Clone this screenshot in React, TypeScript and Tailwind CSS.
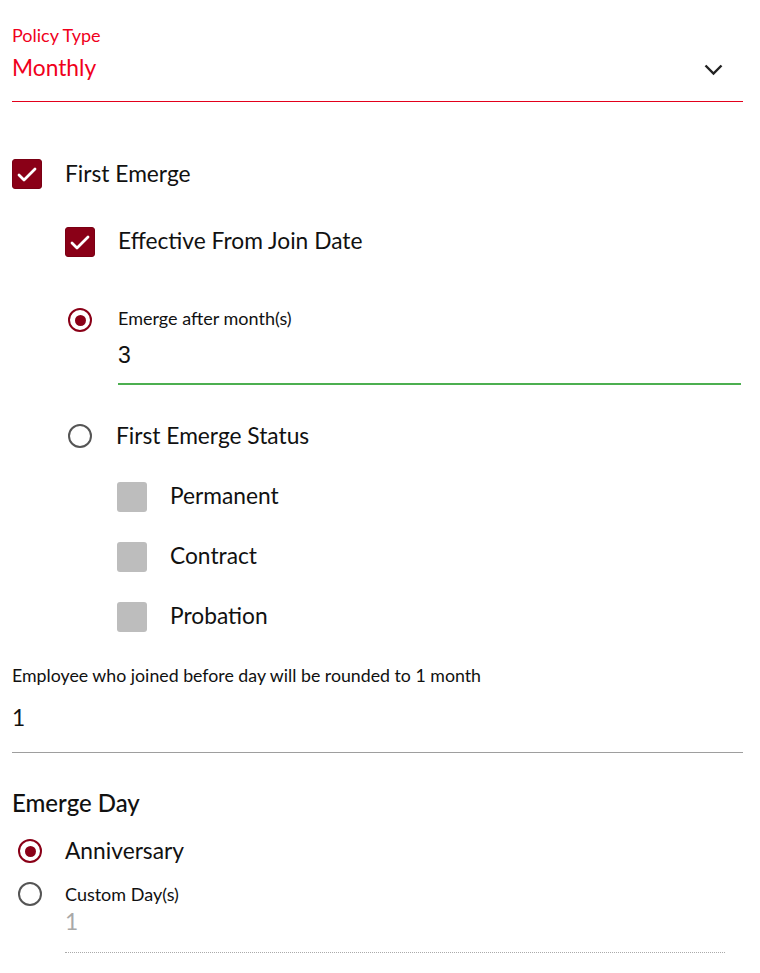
import React from "react";

const Check = () => (
    <svg width="20" height="15" viewBox="0 0 20 15" fill="none">
        <path d="M2 8 L7 13 L18 2" stroke="white" strokeWidth="2.8" strokeLinecap="round" strokeLinejoin="round" />
    </svg>
)

const CheckBox = ( { checked }: { checked: boolean } ) =>
{
    if ( checked )
    {
        return (
            <div className="w-[30px] h-[30px] rounded-[3px] bg-[#8a0017] border border-[#7a0014] flex items-center justify-center shrink-0">
                <Check />
            </div>
        )
    }
    return <div className="w-[30px] h-[30px] rounded-[3px] bg-[#bdbdbd] shrink-0" />
}

const Radio = ( { checked }: { checked: boolean } ) =>
{
    if ( checked )
    {
        return (
            <div className="w-6 h-6 rounded-full border-[2.5px] border-[#8a0017] flex items-center justify-center shrink-0">
                <div className="w-[11px] h-[11px] rounded-full bg-[#8a0017]" />
            </div>
        )
    }
    return <div className="w-6 h-6 rounded-full border-[2.5px] border-[#555555] shrink-0" />
}

export default function App ()
{
    const statuses = [ "Permanent", "Contract", "Probation" ]

    return (
        <div className="bg-white min-h-[973px] w-[760px] pl-3 pr-[17px] text-[#111] font-['Lato','Noto_Sans',sans-serif]">
            {/* policy type select */}
            <div className="pt-[25px] pb-[19px] border-b border-[#e3001b]">
                <div className="h-5 leading-5 text-[18px] text-[#f0001c]">Policy Type</div>
                <div className="mt-[9px] h-7 flex items-center justify-between">
                    <span className="text-[22.75px] leading-7 text-[#f0001c]">Monthly</span>
                    <svg className="mr-[20px] mt-[3px]" width="19" height="12" viewBox="0 0 19 12" fill="none">
                        <path d="M1.5 1.5 L9.5 9.5 L17.5 1.5" stroke="#222" strokeWidth="2.4" />
                    </svg>
                </div>
            </div>

            <div className="mt-[57px] h-[30px] flex items-center gap-[23px]">
                <CheckBox checked />
                <span className="text-[22.75px]">First Emerge</span>
            </div>

            <div className="mt-[38px] ml-[53px] h-[30px] flex items-center gap-[23px]">
                <CheckBox checked />
                <span className="text-[22.75px] -mt-[2px]">Effective From Join Date</span>
            </div>

            <div className="mt-[51px] ml-[53px] flex">
                <div className="w-[30px] flex justify-center">
                    <Radio checked />
                </div>
                <div className="ml-[23px] flex-1 mr-[2px] border-b-2 border-[#4caf50] pb-[13px]">
                    <div className="h-5 leading-5 text-[18px]">Emerge after month(s)</div>
                    <div className="mt-[14px] h-7 leading-7 text-[23px] font-['Liberation_Sans',sans-serif] -translate-y-[1px]">3</div>
                </div>
            </div>

            <div className="mt-[39px] ml-[53px] h-6 flex items-center">
                <div className="w-[30px] flex justify-center">
                    <Radio checked={ false } />
                </div>
                <span className="ml-[21px] text-[22.75px]">First Emerge Status</span>
            </div>

            <div className="mt-[4px] ml-[105px] flex flex-col">
                { statuses.map( s => (
                    <div key={ s } className="mt-[30px] h-[30px] flex items-center gap-[23px]">
                        <CheckBox checked={ false } />
                        <span className="text-[22.75px] -mt-[1px]">{ s }</span>
                    </div>
                ) ) }
            </div>

            <div className="mt-[33px] border-b border-[#9e9e9e] pb-[20px]">
                <div className="h-5 leading-5 text-[17.75px]">Employee who joined before day will be rounded to 1 month</div>
                <div className="mt-[19px] h-7 leading-7 text-[22.75px]">1</div>
            </div>

            <div className="mt-[36px] h-7 leading-7 text-[24px] font-medium">Emerge Day</div>

            <div className="mt-[22px] ml-[6px] h-6 flex items-center gap-[23px]">
                <Radio checked />
                <span className="text-[22.75px]">Anniversary</span>
            </div>

            <div className="mt-[19px] ml-[6px] flex">
                <Radio checked={ false } />
                <div className="ml-[23px] flex-1 mr-[18px] border-b border-dotted border-[#aaaaaa] pb-4">
                    <div className="mt-[2px] h-5 leading-5 text-[18px]">Custom Day(s)</div>
                    <div className="mt-1 h-7 leading-7 text-[22.75px] text-[#a8a8a8]">1</div>
                </div>
            </div>
        </div>
    )
}
